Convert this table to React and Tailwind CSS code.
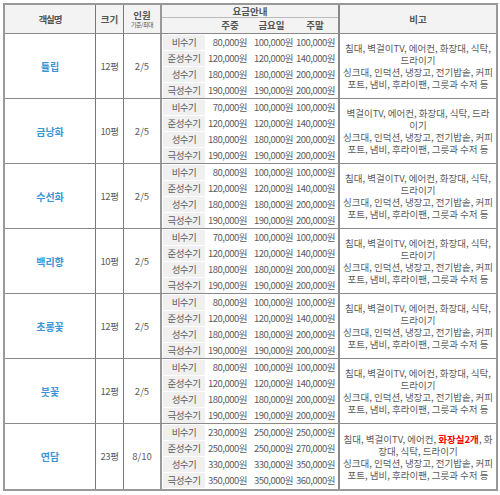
import React from 'react';

const noteA = ['침대, 벽걸이TV, 에어컨, 화장대, 식탁,', '드라이기', '싱크대, 인덕션, 냉장고, 전기밥솥, 커피', '포트, 냄비, 후라이팬, 그릇과 수저 등'];
const noteB = ['벽걸이TV, 에어컨, 화장대, 식탁, 드라', '이기', '싱크대, 인덕션, 냉장고, 전기밥솥, 커피', '포트, 냄비, 후라이팬, 그릇과 수저 등'];

const priceLow = [
  ['70,000원', '100,000원', '100,000원'],
  ['120,000원', '120,000원', '140,000원'],
  ['180,000원', '180,000원', '200,000원'],
  ['190,000원', '190,000원', '200,000원'],
];
const priceStd = [['80,000원', '100,000원', '100,000원'], ...priceLow.slice(1)];

const rooms = [
  { name: '튤립', size: '12평', people: '2/5', prices: priceStd, note: noteA },
  { name: '금낭화', size: '10평', people: '2/5', prices: priceLow, note: noteB },
  { name: '수선화', size: '12평', people: '2/5', prices: priceStd, note: noteA },
  { name: '백리향', size: '10평', people: '2/5', prices: priceLow, note: noteA },
  { name: '초롱꽃', size: '12평', people: '2/5', prices: priceStd, note: noteA },
  { name: '붓꽃', size: '12평', people: '2/5', prices: priceStd, note: noteA },
  {
    name: '연담', size: '23평', people: '8/10',
    prices: [
      ['230,000원', '250,000원', '250,000원'],
      ['250,000원', '250,000원', '270,000원'],
      ['330,000원', '330,000원', '350,000원'],
      ['350,000원', '350,000원', '360,000원'],
    ],
    note: null,
  },
];

const seasons = ['비수기', '준성수기', '성수기', '극성수기'];

const NoteC = () => (
  <>
    <div>침대, 벽걸이TV, 에어컨, <span className="font-bold text-[#ff0000]">화장실2개</span>, 화</div>
    <div>장대, 식탁, 드라이기</div>
    <div>싱크대, 인덕션, 냉장고, 전기밥솥, 커피</div>
    <div>포트, 냄비, 후라이팬, 그릇과 수저 등</div>
  </>
);

const RoomRow = ({ room, last }) => (
  <div className={`grid grid-cols-[91px_28px_38px_178px_156px] h-[65px] ${last ? '' : 'border-b border-[#8a8a8a]'}`}>
    <div className="flex items-center justify-center border-r border-[#777] text-[10px] font-bold text-[#3b95d6]">
      {room.name}
    </div>
    <div className="flex items-center justify-center border-r border-[#777] tracking-[-0.5px]">{room.size}</div>
    <div className="flex items-center justify-center border-r-2 border-[#999]">{room.people}</div>
    <div className="flex flex-col border-r-2 border-[#888] pl-[1px]">
      {room.prices.map((p, i) => (
        <div key={seasons[i]} className="flex h-[16px] items-center whitespace-nowrap">
          <div className="flex h-[15px] w-[42px] shrink-0 items-center justify-center bg-[#f0f0f0] tracking-[-0.5px]">
            {seasons[i]}
          </div>
          <div className="w-[44px] shrink-0 pr-[2px] text-right tracking-[-0.5px]">{p[0]}</div>
          <div className="w-[45px] shrink-0 pr-[1px] text-right tracking-[-0.5px]">{p[1]}</div>
          <div className="w-[42px] shrink-0 pr-[1px] text-right tracking-[-0.5px]">{p[2]}</div>
        </div>
      ))}
    </div>
    <div className="flex flex-col items-center justify-center whitespace-nowrap text-center leading-[12px]">
      {room.note ? room.note.map((l) => <div key={l}>{l}</div>) : <NoteC />}
    </div>
  </div>
);

export default function App() {
  return (
    <div
      className="w-[500px] h-[495px] bg-white pt-[3px] pl-[3px] text-[9.5px] text-[#5c5c5c]"
      style={{ fontFamily: '"Noto Sans CJK KR", "Noto Sans", sans-serif' }}
    >
      <div className="w-[495px] border-2 border-[#999]">
        {/* Header */}
        <div className="grid grid-cols-[91px_28px_38px_178px_156px] h-[29px] border-b border-[#8a8a8a] bg-[#f3f3f3] font-bold text-[#555]">
          <div className="flex items-center justify-center border-r border-[#777] tracking-[-1px]">객실명</div>
          <div className="flex items-center justify-center border-r border-[#777]">크기</div>
          <div className="flex flex-col items-center justify-center border-r-2 border-[#999] leading-[11px]">
            <div>인원</div>
            <div className="text-[6px] font-normal leading-[8px] tracking-[-0.5px]">기준/최대</div>
          </div>
          <div className="flex flex-col border-r-2 border-[#888]">
            <div className="flex h-[13px] items-center justify-center border-b border-[#bbb]">요금안내</div>
            <div className="flex flex-1 items-center pl-[1px]">
              <div className="w-[42px] shrink-0" />
              <div className="w-[44px] shrink-0 pl-[6px] text-center">주중</div>
              <div className="w-[45px] shrink-0 text-center">금요일</div>
              <div className="w-[42px] shrink-0 text-center">주말</div>
            </div>
          </div>
          <div className="flex items-center justify-center">비고</div>
        </div>
        {rooms.map((room, i) => (
          <RoomRow key={room.name} room={room} last={i === rooms.length - 1} />
        ))}
      </div>
    </div>
  );
}
